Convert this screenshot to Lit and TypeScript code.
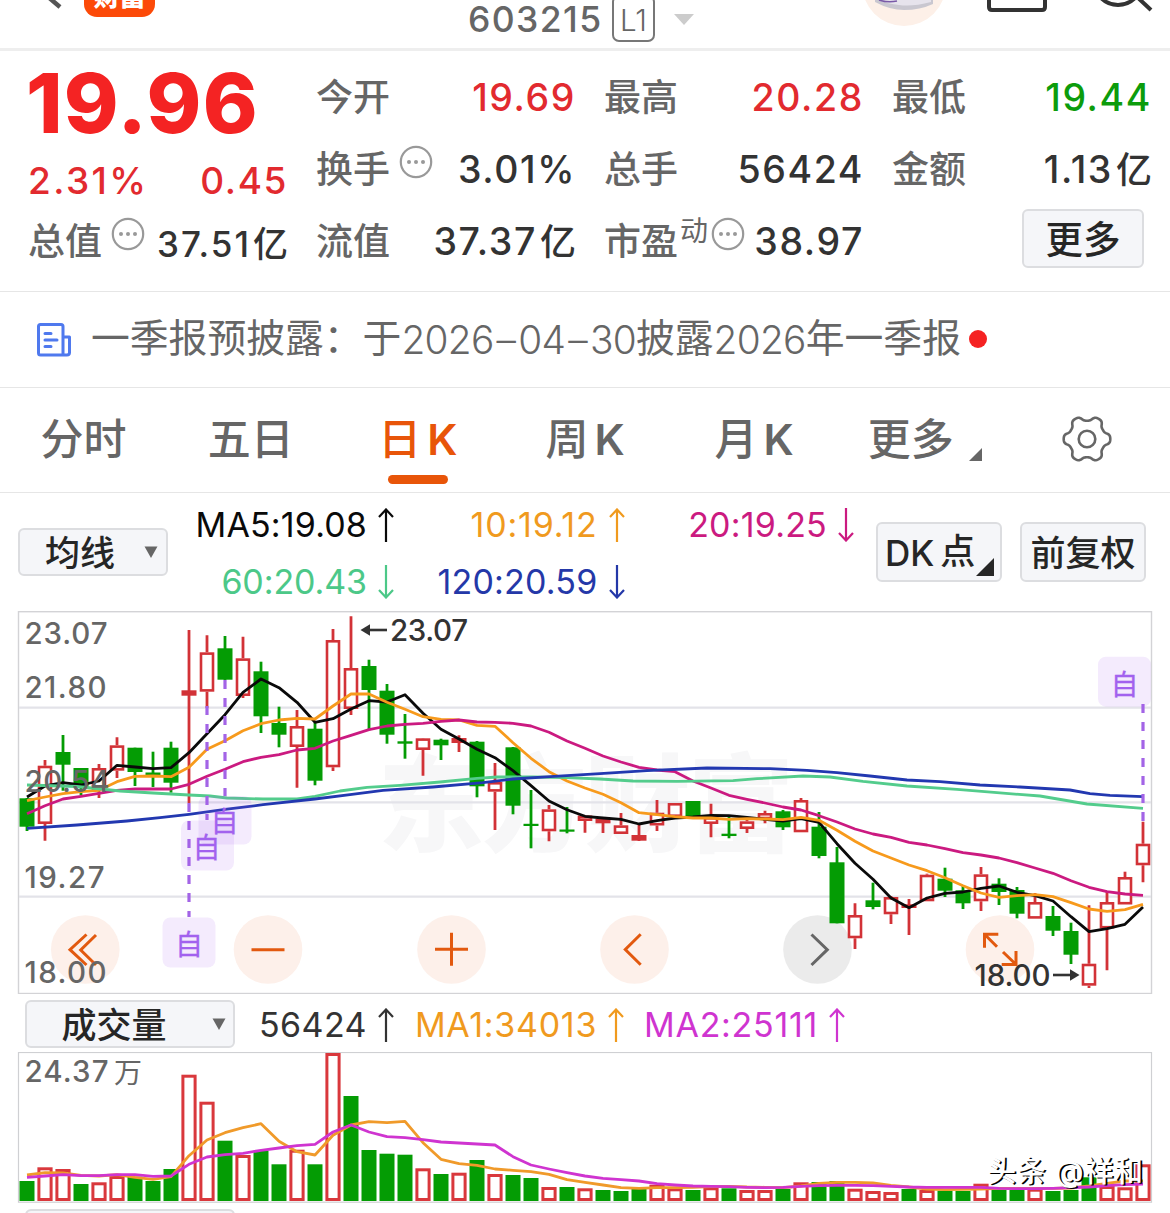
import { LitElement, html, svg, css } from "lit";
import { customElement, property } from "lit/decorators.js";

type Candle = [string, number, number, number, number];

// [colour, high, body top, body bottom, low]; "f" is a solid red body
const CANDLES: Candle[] = [
  ["g", 798, 798.3, 826.7, 831], ["r", 760, 765.7, 824, 840.7], ["g", 735, 752, 764.7, 790.7],
  ["g", 768, 768, 787, 795], ["r", 764, 768, 790, 798], ["r", 737.3, 745.3, 770.7, 778],
  ["g", 747.7, 747.7, 772, 786], ["g", 751.7, 772.5, 775, 787], ["g", 741.7, 747.7, 782.7, 792.7],
  ["f", 630, 690.3, 695.7, 803], ["r", 635.3, 652.3, 691.7, 708], ["g", 636, 648.3, 679.7, 680],
  ["r", 636.7, 658.3, 696, 698], ["g", 661.7, 671.3, 716.3, 733], ["g", 706.7, 723, 734.7, 747.3],
  ["r", 710, 726, 747, 787.7], ["g", 723, 728.7, 780.7, 785.3], ["r", 629, 640, 767.3, 771],
  ["r", 616.3, 668, 709, 715], ["g", 659.7, 666, 690, 730.3], ["g", 684, 690.7, 734.7, 743.7],
  ["g", 714, 741.3, 743.7, 758.7], ["r", 738, 738.3, 750, 775.7], ["g", 738.7, 739.7, 745.3, 760],
  ["f", 735.3, 738, 743, 752], ["g", 741, 741.7, 786.3, 797.3], ["r", 763, 782, 791.7, 830],
  ["g", 747, 747.3, 805.7, 814.3], ["g", 790, 823.8, 826, 848.3], ["r", 805, 809.3, 831.3, 841.3],
  ["g", 807, 829.5, 831.7, 833.3], ["r", 815, 815.5, 821, 832.7], ["f", 818, 818.7, 823.3, 833],
  ["r", 813, 825.3, 834, 834], ["f", 823.3, 835, 840.7, 841], ["r", 800, 812.7, 825.5, 831],
  ["r", 803, 803, 817, 817], ["g", 801, 801, 816, 816], ["r", 803.7, 817, 824, 837.3],
  ["g", 817, 833.7, 836, 838.3], ["r", 820, 821.3, 829, 833], ["r", 810.7, 813, 819.3, 823.3],
  ["g", 810, 811.3, 827.3, 830], ["r", 798, 800, 832.3, 832.3], ["g", 812, 826.7, 856, 858.3],
  ["g", 847, 862.3, 923.3, 923.3], ["r", 903.3, 915, 938.3, 949], ["g", 882.7, 900.3, 907, 909.3],
  ["r", 896, 897, 914.3, 924], ["f", 899, 904.3, 908, 935], ["r", 873.7, 874.7, 901.3, 901.3],
  ["g", 867.7, 878.7, 890.7, 897], ["g", 885, 890.3, 903.3, 909], ["r", 867, 874.3, 901.3, 911],
  ["g", 878.3, 883.7, 892, 905], ["g", 887, 890, 913.7, 918.3], ["r", 893, 902, 918.7, 918.7],
  ["g", 906, 916, 930.7, 936], ["g", 922.7, 931, 954.7, 964], ["r", 905.3, 963.7, 985.7, 988],
  ["r", 892, 902, 928.5, 970.3], ["r", 871.7, 877, 904.5, 904.5], ["r", 821.7, 843.7, 865.3, 882.3],
];

const MA5 = [797, 786, 782.7, 785, 781, 765.3, 767, 768.7, 767.7, 752.7, 733.7, 714.7, 692.3, 679, 687.7, 702.3, 722.3, 718.7, 709, 700.7, 702, 694.7, 713.3, 729.3, 739, 749.3, 757.7, 770.7, 785.7, 801, 809.7, 816.3, 818, 819.3, 824, 820.7, 818, 817, 815.3, 815.7, 817.3, 819.3, 821, 818.7, 822.3, 843.7, 863.3, 879.3, 898, 907.7, 898, 893.3, 892, 888.3, 886, 892.3, 895.7, 901, 916.7, 931.7, 928.7, 924.3, 907];
const MA10 = [800.7, 797, 793.7, 791.7, 790.3, 781.7, 776.3, 776, 776.7, 767.3, 749.3, 740.7, 730.7, 723.7, 720, 718.3, 719, 706, 694, 694, 702.3, 709.3, 716.7, 719.3, 720, 725.3, 726.3, 742.7, 758.3, 771.7, 781, 788, 794.3, 802.7, 812.7, 814.7, 816.7, 818, 818, 819.3, 818.7, 819, 819.7, 817.3, 820.3, 830.3, 841.3, 851, 858, 865, 870.7, 877.7, 885.7, 893, 897.3, 895.7, 894.7, 896.7, 902.7, 909, 911.3, 909.7, 904.3];
const MA20 = [813.7, 805.7, 799, 796.3, 793.3, 790.3, 789, 789, 789, 784.3, 776.3, 769.3, 761.7, 757.3, 754.7, 750, 748.3, 741, 735.3, 729.7, 726, 724.3, 723.3, 721.3, 720, 722, 722.3, 723.3, 726, 732.3, 741, 748.3, 756, 762, 767.3, 770, 771.7, 781, 788, 795.3, 799.3, 803, 807, 810, 815.7, 822, 829, 834, 837.3, 842.3, 845, 848.7, 852.7, 855, 858, 862.7, 868, 873.3, 880.7, 887.3, 891.7, 894, 895.3];
const MA60 = "27,785 77,786.5 120,791 153,793 189,795 210,796 227,798 263,799 297,799 315,796.3 340,791 367,787.3 400,785.3 440,782 477,778.3 497,777 533,777 567,777.7 600,779 633,781 677,781.3 733,780.7 757,778.7 803,776 830,777 863,781.3 907,786 957,789.3 997,792.7 1040,796 1087,804 1143,808.3";
const MA120 = "27,828.3 77,825 127,821 160,817.7 189,814.3 225,809.3 263,804.7 315,799 350,794.7 383,790.3 433,787 483,782.7 513,779 550,776.7 600,773.7 647,770.7 707,768 770,768.7 807,770.3 837,772.7 870,776 907,780 940,781.7 980,785 1020,787 1070,790 1090,793.7 1110,795.3 1143,796.7";

const VOLUMES: [string, number][] = [
  ["g", 1181], ["r", 1167.3], ["r", 1169], ["g", 1184], ["r", 1182.3], ["r", 1176], ["g", 1176.7], ["g", 1181], ["g", 1169],
  ["r", 1074.7], ["r", 1101.7], ["g", 1140.7], ["r", 1155], ["g", 1150.7], ["g", 1164.3], ["r", 1149.7], ["g", 1164.3],
  ["r", 1053], ["g", 1096], ["g", 1150], ["g", 1153.7], ["g", 1154.7], ["r", 1168.3], ["g", 1174], ["r", 1172.7], ["g", 1160],
  ["r", 1174], ["g", 1175], ["g", 1178], ["r", 1187], ["g", 1187], ["r", 1188.3], ["g", 1190], ["g", 1191], ["g", 1189],
  ["r", 1184.7], ["r", 1188.3], ["g", 1190], ["r", 1187.3], ["g", 1188.3], ["r", 1190], ["r", 1190], ["g", 1189],
  ["r", 1182.3], ["g", 1182], ["g", 1181], ["r", 1188.7], ["r", 1191], ["r", 1192], ["g", 1189], ["r", 1190], ["g", 1190.7],
  ["g", 1191], ["r", 1183.7], ["g", 1189.7], ["g", 1190], ["r", 1188.7], ["g", 1191], ["g", 1190], ["g", 1177.3],
  ["r", 1186], ["r", 1187.3], ["r", 1164.3],
];
const VMA1 = [1175, 1172.7, 1173, 1175.3, 1176, 1174.7, 1177.3, 1179.3, 1176.7, 1155.7, 1140, 1132.7, 1127.7, 1123.7, 1141.3, 1151.7, 1155, 1135.3, 1125, 1121.7, 1122.7, 1121.3, 1142.7, 1159.3, 1163.7, 1165.3, 1169, 1170.3, 1171.7, 1174.3, 1179.7, 1182.3, 1185, 1187.7, 1188.3, 1187.7, 1187.7, 1187.3, 1186.7, 1186.3, 1187, 1187.3, 1187.7, 1186, 1183.3, 1182.3, 1182.3, 1183, 1185.3, 1187, 1189, 1189.7, 1189.3, 1189, 1188.3, 1188.3, 1188.3, 1188.3, 1188, 1186, 1183.3, 1181, 1181];
const VMA2 = [1177.3, 1176, 1174.7, 1175.7, 1175.7, 1174.7, 1174.7, 1176.3, 1176, 1164.3, 1157, 1154.7, 1153.3, 1150.3, 1148, 1145.7, 1144.3, 1132, 1125, 1132, 1136.7, 1137.7, 1139.7, 1142, 1143, 1144, 1145, 1156.7, 1165, 1169, 1172.7, 1176, 1178.3, 1179.7, 1181, 1183.7, 1185, 1186, 1186.3, 1186.7, 1187.3, 1187.7, 1187.3, 1186.3, 1185.7, 1185.3, 1185.3, 1185.7, 1186.3, 1187, 1187.3, 1187.3, 1187.3, 1187.3, 1188.3, 1188.7, 1188.7, 1188.3, 1187.7, 1187, 1185.7, 1184.7, 1184];

const cx = (i: number) => 27 + 18 * i;
const line = (ys: number[]) => ys.map((y, i) => `${cx(i)},${y}`).join(" ");
const RED = "#d23237";
const GREEN = "#049c04";

const label = (x: number, y: number, w: number, text: string, cls: string) =>
  svg`<text class=${cls} x=${x} y=${y} textLength=${w}>${text}</text>`;

const fonts = css`
  :host {
    display: block;
    font-family: Inter, "Noto Sans CJK SC", sans-serif;
  }
  svg { display: block; }
`;

@customElement("price-chart")
class PriceChart extends LitElement {
  static styles = [fonts, css`
    text { font-family: Inter, "Noto Sans CJK SC", sans-serif; }
    .axis { font-size: 29.5px; font-weight: 500; fill: #666; }
    .mark { font-size: 29.5px; font-weight: 500; fill: #333; }
    .flag { font-size: 28px; font-weight: 400; fill: #a262ee; stroke: #a262ee; stroke-width: 0.3px; text-anchor: middle; }
    .logo { font-size: 106px; font-weight: 900; fill: #f7f7f8; }
    .ma { fill: none; stroke-width: 2.8; stroke-linejoin: round; }
    .tool { fill: none; stroke: #e2590f; stroke-width: 3; }
    .tool.off { stroke: #666; }
  `];

  candle([c, hi, top, bot, lo]: Candle, i: number) {
    const x = cx(i);
    const col = c === "g" ? GREEN : RED;
    if (c === "r") {
      return svg`
        <path d="M${x} ${hi}V${top}M${x} ${bot}V${lo}" stroke=${col} stroke-width="2.8"/>
        <rect x=${x - 6} y=${top + 1.3} width="12" height=${Math.max(bot - top - 2.6, 1)} fill="#fff" stroke=${col} stroke-width="2.6"/>`;
    }
    return svg`
      <path d="M${x} ${hi}V${lo}" stroke=${col} stroke-width="2.8"/>
      <rect x=${x - 7.5} y=${top} width="15" height=${bot - top} fill=${col}/>`;
  }

  flag(x: number, y: number, tx: number, ty: number, h = 50) {
    return svg`
      <rect x=${x} y=${y} width="53" height=${h} rx="8" fill="#a35cf0" fill-opacity="0.12"/>
      <text class="flag" x=${tx} y=${ty}>自</text>`;
  }

  render() {
    return html`<svg width="1170" height="383" viewBox="0 611 1170 383">
      <rect x="18.5" y="611.5" width="1133" height="382" fill="#fff" stroke="#d3d3d6" stroke-width="1.4"/>
      <path d="M19 611.3H1151" stroke="#d3d3d6" stroke-width="2"/>
      ${label(378, 843, 416, "东方财富", "logo")}
      <path d="M19 707.7H1151M19 802.3H1151M19 896.7H1151" stroke="#e3e3e9" stroke-width="2.2"/>
      ${[85.3, 268, 451.5, 634.5, 1000].map((x) => svg`<circle cx=${x} cy="949.5" r="34.3" fill="#fdf0ea"/>`)}
      <circle cx="817.5" cy="949.5" r="34.3" fill="#ebebeb"/>
      ${label(24.5, 643.7, 83, "23.07", "axis")}
      ${label(24.5, 697.7, 82, "21.80", "axis")}
      ${label(24.5, 887.7, 80, "19.27", "axis")}
      ${CANDLES.map((c, i) => this.candle(c, i))}
      <polyline class="ma" stroke="#0a0a0a" points=${line(MA5)}/>
      <polyline class="ma" stroke="#f79a1c" points=${line(MA10)}/>
      <polyline class="ma" stroke="#cb1a80" points=${line(MA20)}/>
      <polyline class="ma" stroke="#53cc8c" points=${MA60}/>
      <polyline class="ma" stroke="#2238b0" points=${MA120}/>
      ${label(24.5, 792, 85, "20.54", "axis")}
      <g stroke="#a364e6" stroke-width="3.2" stroke-dasharray="9 9">
        <path d="M189 803V917"/>
        <path d="M207 706V820"/>
        <path d="M225 680V796"/>
        <path d="M1143 704V822"/>
      </g>
      ${this.flag(162.5, 917.5, 189, 955)}
      ${this.flag(181, 820.5, 206.5, 857.5)}
      ${this.flag(198.5, 796, 224.5, 831.5, 48.5)}
      ${this.flag(1098, 656.7, 1124.5, 694.5)}
      <path class="tool" d="M86.5 934.5L70 949.7L86.5 965M96 935L80.7 950L96 965"/>
      ${label(24.5, 983, 82, "18.00", "axis")}
      <path class="tool" d="M251.5 949.7H284.5M435 949.3H468M451.5 932.7V965.7M640.7 934.3L625.3 949.5L640.7 964.7"/>
      <path class="tool off" d="M811.5 934.5L827.3 949.7L811.5 965"/>
      <path class="tool" d="M984.5 947.7V934.2H998.3M984.5 934.2L997 946.7M1016 951V964.5H1001.7M1016 964.5L1003 952"/>
      ${label(390, 640.5, 78, "23.07", "mark")}
      <path d="M368 630H387" stroke="#333" stroke-width="2.6"/>
      <path d="M360.5 630L370 624.2V635.8Z" fill="#333"/>
      ${label(974.5, 986, 76, "18.00", "mark")}
      <path d="M1053 975H1072" stroke="#333" stroke-width="2.6"/>
      <path d="M1079.5 975L1070 969.2V980.8Z" fill="#333"/>
    </svg>`;
  }
}

@customElement("volume-chart")
class VolumeChart extends LitElement {
  static styles = [fonts, css`
    text { font-family: Inter, "Noto Sans CJK SC", sans-serif; }
    .axis { font-size: 29.5px; font-weight: 500; fill: #666; }
    .unit { font-size: 28px; fill: #666; }
    .ma { fill: none; stroke-width: 2.8; stroke-linejoin: round; }
    .sign { font-size: 29px; font-weight: 500; fill: #fff; text-shadow: 1.8px 1.8px 0 #000; }
  `];

  render() {
    return html`<svg width="1170" height="151" viewBox="0 1052 1170 151">
      <rect x="18.5" y="1052.5" width="1133" height="149.7" fill="#fff" stroke="#cfd0d3" stroke-width="1.2"/>
      ${label(24.5, 1082, 84, "24.37", "axis")}
      <text class="unit" x="114" y="1082.500">万</text>
      ${VOLUMES.map(([c, top], i) => c === "g"
        ? svg`<rect x=${cx(i) - 7.5} y=${top} width="15" height=${1201 - top} fill=${GREEN}/>`
        : svg`<rect x=${cx(i) - 6.1} y=${top + 1.5} width="12.2" height=${1201 - top - 3} fill="#fff" stroke="#d9383c" stroke-width="3"/>`)}
      <polyline class="ma" stroke="#f09a2a" points=${line(VMA1)}/>
      <polyline class="ma" stroke="#cf34d0" points=${line(VMA2)}/>
      ${label(987, 1181.5, 156, "头条 @祥和", "sign")}
    </svg>`;
  }
}

@customElement("trend-value")
class TrendValue extends LitElement {
  @property() text = "";
  @property() dir = "up";
  static styles = [fonts, css`
    :host { display: flex; align-items: center; gap: 11px; font-size: 34px; line-height: 57px; white-space: nowrap; }
  `];
  render() {
    return html`<span>${this.text}</span>
      <svg width="16" height="34" viewBox="0 0 16 34" fill="none" stroke="currentColor" stroke-width="2.2">
        <path d=${this.dir === "up" ? "M8 34V1.5M1 9L8 1.5L15 9" : "M8 0V32.5M1 25L8 32.5L15 25"}/>
      </svg>`;
  }
}

const dots = html`<svg class="dots" width="34" height="34" viewBox="0 0 34 34">
  <circle cx="17" cy="17" r="15.2" fill="none" stroke="#999" stroke-width="2.2"/>
  <g fill="#999"><circle cx="10" cy="17" r="2"/><circle cx="17" cy="17" r="2"/><circle cx="24" cy="17" r="2"/></g>
</svg>`;

const gearPath = (() => {
  const pts: string[] = [];
  for (let k = 0; k <= 144; k++) {
    const a = (k / 144) * Math.PI * 2;
    const r = 20.8 + 2.5 * Math.tanh(1.6 * Math.cos(6 * a)) / Math.tanh(1.6);
    pts.push(`${(25 + r * Math.cos(a)).toFixed(2)} ${(25 + r * Math.sin(a)).toFixed(2)}`);
  }
  return "M" + pts.join("L") + "Z";
})();

@customElement("app-root")
class AppRoot extends LitElement {
  static styles = [fonts, css`
    :host { width: 1170px; height: 1213px; overflow: hidden; background: #fff; color: #333; }
    .top { height: 48px; border-bottom: 3px solid #eee; display: flex; overflow: hidden; }
    .back { margin-left: 44px; }
    .brand { margin-left: 20px; width: 71px; height: 17px; border-radius: 0 0 13px 13px; background: #fc4a08; color: #fff;
      font-size: 26px; font-weight: 900; line-height: 26px; overflow: hidden; display: flex; align-items: flex-end; justify-content: center; }
    .brand span { margin-bottom: 7px; }
    .code { margin-left: 313px; width: 136px; font-size: 35.5px; line-height: 40px; font-weight: 500; color: #666; letter-spacing: 1.4px; }
    .level { margin-left: 8px; margin-top: -5px; width: 39px; height: 43px; border: 2px solid #777; border-radius: 7px; font-size: 29.5px; line-height: 47px; text-align: center; color: #666; font-weight: 300; }
    .drop { margin: 14px 0 0 19px; }
    .actions { margin-left: 169px; }

    .stats { height: 229px; padding: 11px 19px 0 28px; display: grid; grid-template-columns: repeat(4, 259px); column-gap: 29px; grid-template-rows: repeat(3, 72px); border-bottom: 1px solid #e6e6e6; }
    .stat { display: flex; align-items: center; font-size: 37.5px; line-height: 72px; white-space: nowrap; }
    .name { color: #666; font-size: 37px; font-weight: 500; }
    .num { margin-left: auto; margin-right: -1px; font-weight: 500; letter-spacing: 1.6px; }
    .unit { font-weight: 500; font-size: 36px; margin-left: 3px; letter-spacing: 0; }
    .up { color: #e22a2f; }
    .down { color: #0c9c0c; }
    .price { font-size: 83px; font-weight: 800; color: #f42323; line-height: 82px; letter-spacing: 1.2px; margin-left: -2px; }
    .low { padding-top: 22px; line-height: 50px; height: 50px; }
    .low .num { font-size: 37px; }
    .low .pct { margin-left: 0; letter-spacing: 2.4px; }
    .cap .num { font-size: 35px; padding-top: 3px; letter-spacing: 2px; }
    .cap .unit { margin-left: 2px; font-size: 35px; letter-spacing: 0; }
    .dots { margin: -16px 0 0 9px; flex: none; }
    .dyn { font-size: 28px; color: #666; line-height: 30px; margin: -22px 0 0 2px; }
    .dyn + .dots { margin-left: 3px; }
    .btn { box-sizing: border-box; border: 2px solid #dcdde0; border-radius: 6px; background: #f5f6f9; color: #262626; font-weight: 500; display: flex; align-items: center; justify-content: center; white-space: nowrap; }
    .btn span { position: relative; top: -2px; }
    .btn.more { margin: 3px 7px 0 auto; width: 122px; height: 59px; font-size: 37.5px; }

    .notice { height: 95px; display: flex; align-items: center; padding-left: 36px; border-bottom: 1px solid #e6e6e6; font-size: 38.8px; line-height: 60px; color: #666; white-space: nowrap; }
    .notice p { margin: 0; padding-bottom: 4px; }
    .notice p:first-of-type { margin-left: 19px; }
    .notice .digits { padding-bottom: 0; letter-spacing: -0.7px; font-weight: 300; }
    .notice em { font-style: normal; margin: 0 3px; }
    .notice i { width: 18px; height: 18px; border-radius: 50%; background: #f52222; margin: 0 0 1px 8px; }

    .tabs { height: 104px; display: grid; grid-template-columns: repeat(7, 1fr); border-bottom: 1px solid #e6e6e6; }
    .tab { display: flex; flex-direction: column; align-items: center; font-size: 43px; line-height: 60px; padding-top: 21px; color: #666; font-weight: 500; white-space: nowrap; }
    .tab b { font-weight: 600; margin-left: 6px; }
    .tab.on { color: #e85509; }
    .tab.on::after { content: ""; width: 60px; height: 9px; border-radius: 5px; background: #e85509; margin-top: 6px; }
    .month { margin-left: 4px; }
    .menu { display: flex; align-items: flex-end; gap: 15px; margin-left: 11px; }
    .menu svg { margin-bottom: 8px; }
    .gear { align-self: start; justify-self: center; margin: 26px 0 0 2px; }

    .legend { height: 118px; display: flex; }
    .legend .line { margin: 35px 0 0 18px; width: 150px; height: 48px; font-size: 35px; gap: 29px; padding-left: 17px; }
    .values { width: 687px; height: 114px; padding-top: 3px; display: grid; grid-template-columns: 226px 230.5px 229.5px; justify-items: end; letter-spacing: 0.15px; }
    .c5 { color: #0a0a0a; } .c10 { color: #f09a1e; letter-spacing: 0.8px; } .c20 { color: #cb1a80; letter-spacing: 0.2px; } .c60 { color: #4cc888; letter-spacing: -0.1px; } .c120 { color: #2438a8; letter-spacing: 0.2px; }
    .legend .dk { margin: 29px 0 0 21px; width: 126px; height: 60px; font-size: 35px; align-items: stretch; line-height: 58px; justify-content: flex-start; padding-left: 7px; }
    .dk span { margin-left: 6px; }
    .dk svg { align-self: flex-end; margin: 0 0 4px 1px; }
    .legend .adj { margin: 29px 0 0 18px; width: 126px; height: 60px; font-size: 35px; }

    .vol { height: 58px; display: flex; align-items: center; }
    .vol .kind { margin: 2px 0 0 25px; width: 210px; height: 48px; font-size: 35px; gap: 45px; padding-left: 27px; }
    .vol trend-value { padding-top: 3px; }
    .v0 { margin-left: 24px; color: #333; letter-spacing: 0.4px; }
    .v1 { margin-left: 21px; color: #f09a1e; letter-spacing: 0.7px; }
    .v2 { margin-left: 20px; color: #cf34d0; letter-spacing: 0.7px; }
    .stub { margin: 6px 0 0 25px; width: 210px; height: 48px; }
  `];

  render() {
    const tri = html`<svg width="14" height="12" viewBox="0 0 14 12"><path d="M0.5 0.5H13.5L7 12Z" fill="#666"/></svg>`;
    return html`
      <div class="top">
        <svg class="back" width="20" height="10" viewBox="44 0 20 10"><path d="M47 -4L60 7" stroke="#555" stroke-width="4.5"/></svg>
        <div class="brand"><span>财富</span></div>
        <div class="code">603215</div>
        <div class="level">L1</div>
        <svg class="drop" width="20" height="11" viewBox="0 0 20 11"><path d="M0 0H20L10 11Z" fill="#ccc"/></svg>
        <svg class="actions" width="300" height="40" viewBox="863 0 300 40" fill="none">
          <circle cx="904" cy="-16" r="42" fill="#fdf0e8"/>
          <path d="M875 0H933V4Q920 10 904 10Q890 10 875 2Z" fill="#c9c7d0"/>
          <path d="M880 0H931V2Q912 7 899 5Q888 4 880 0Z" fill="#e6e3ec"/>
          <path d="M879 0Q888 3 897 1" stroke="#7a5aa8" stroke-width="1.6"/>
          <path d="M989 -10V7Q989 10 992 10H1042Q1045 10 1045 7V-10" stroke="#333" stroke-width="4"/>
          <circle cx="1118" cy="-19" r="24" stroke="#333" stroke-width="4"/>
          <path d="M1135 -5L1151 10" stroke="#333" stroke-width="4"/>
        </svg>
      </div>

      <div class="stats">
        <div class="price">19.96</div>
        <div class="stat"><span class="name">今开</span><span class="num up">19.69</span></div>
        <div class="stat"><span class="name">最高</span><span class="num up">20.28</span></div>
        <div class="stat"><span class="name">最低</span><span class="num down">19.44</span></div>
        <div class="stat low"><span class="num up pct">2.31%</span><span class="num up">0.45</span></div>
        <div class="stat"><span class="name">换手</span>${dots}<span class="num">3.01%</span></div>
        <div class="stat"><span class="name">总手</span><span class="num">56424</span></div>
        <div class="stat"><span class="name">金额</span><span class="num">1.13<span class="unit">亿</span></span></div>
        <div class="stat cap"><span class="name">总值</span>${dots}<span class="num">37.51<span class="unit">亿</span></span></div>
        <div class="stat"><span class="name">流值</span><span class="num">37.37<span class="unit">亿</span></span></div>
        <div class="stat"><span class="name">市盈</span><span class="dyn">动</span>${dots}<span class="num">38.97</span></div>
        <div class="btn more"><span>更多</span></div>
      </div>

      <div class="notice">
        <svg width="36" height="36" viewBox="0 0 36 36" fill="none" stroke="#4f79ee" stroke-width="3" stroke-linejoin="round" stroke-linecap="round">
          <path d="M27 33H4.500Q2.500 33 2.500 31V4.500Q2.500 2.500 4.500 2.500H25Q27 2.500 27 4.500V33H31Q33.500 33 33.500 30.500V15H27"/>
          <path d="M9 11.500H15M9 18H21M9 24.500H15"/>
        </svg>
        <p>一季报预披露：于</p><p class="digits">2026<em>–</em>04<em>–</em>30</p><p>披露</p><p class="digits">2026</p><p>年一季报</p><i></i>
      </div>

      <div class="tabs">
        <div class="tab">分时</div>
        <div class="tab">五日</div>
        <div class="tab on"><div>日<b>K</b></div></div>
        <div class="tab"><div>周<b>K</b></div></div>
        <div class="tab"><div class="month">月<b>K</b></div></div>
        <div class="tab"><div class="menu">更多<svg width="13" height="13" viewBox="0 0 13 13"><path d="M13 0V13H0Z" fill="#666"/></svg></div></div>
        <svg class="gear" width="50" height="50" viewBox="0 0 50 50" fill="none" stroke="#666" stroke-width="2.6" stroke-linejoin="round">
          <path d=${gearPath}/><circle cx="25" cy="25" r="8.300"/>
        </svg>
      </div>

      <div class="legend">
        <div class="btn line"><span>均线</span>${tri}</div>
        <div class="values">
          <trend-value class="c5" text="MA5:19.08" dir="up"></trend-value>
          <trend-value class="c10" text="10:19.12" dir="up"></trend-value>
          <trend-value class="c20" text="20:19.25" dir="down"></trend-value>
          <trend-value class="c60" text="60:20.43" dir="down"></trend-value>
          <trend-value class="c120" text="120:20.59" dir="down"></trend-value>
        </div>
        <div class="btn dk">DK<span>点</span><svg width="18" height="18" viewBox="0 0 18 18"><path d="M18 0V18H0Z" fill="#262626"/></svg></div>
        <div class="btn adj"><span>前复权</span></div>
      </div>

      <price-chart></price-chart>

      <div class="vol">
        <div class="btn kind"><span>成交量</span>${tri}</div>
        <trend-value class="v0" text="56424" dir="up"></trend-value>
        <trend-value class="v1" text="MA1:34013" dir="up"></trend-value>
        <trend-value class="v2" text="MA2:25111" dir="up"></trend-value>
      </div>
      <volume-chart></volume-chart>
      <div class="btn stub"></div>
    `;
  }
}
